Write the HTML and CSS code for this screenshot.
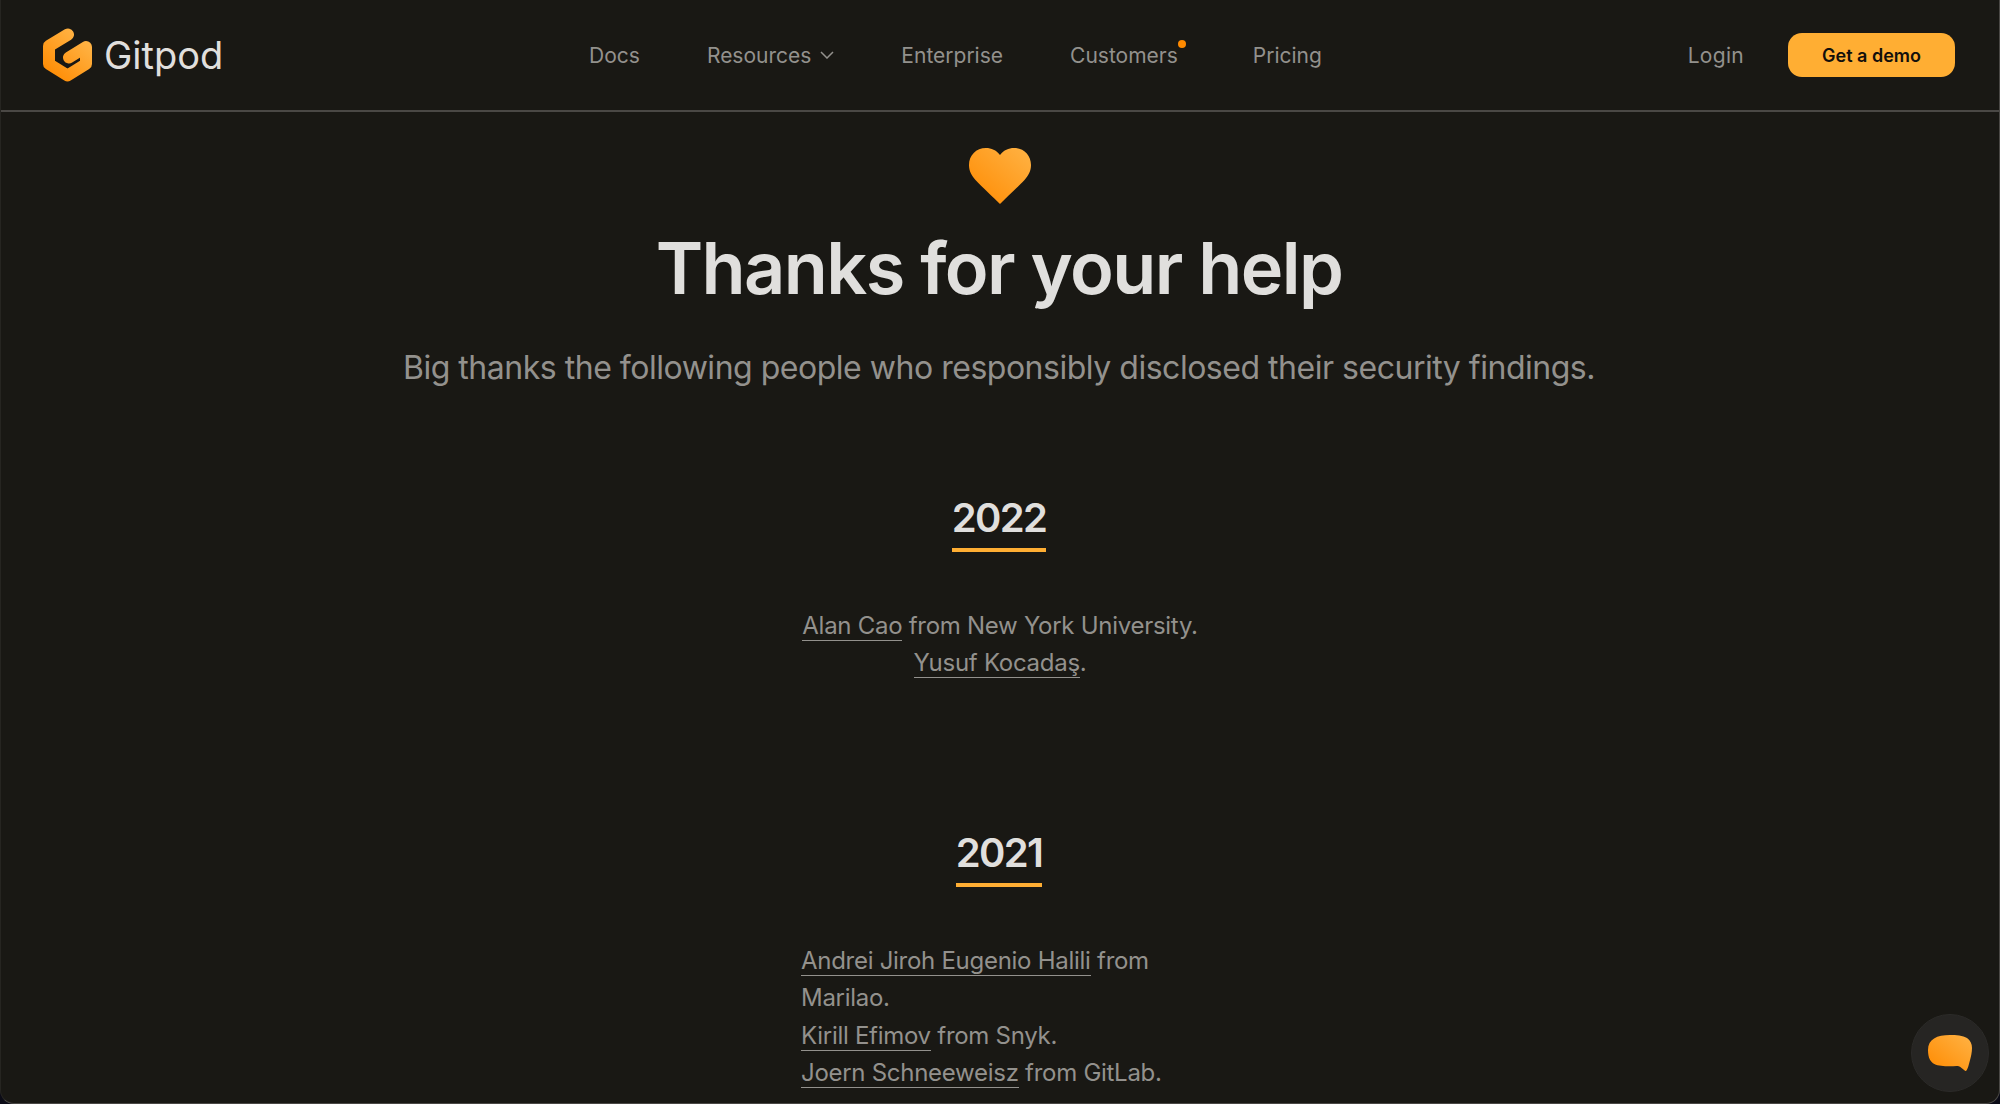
FILE: index.html
```html
<!DOCTYPE html>
<html lang="en">
<head>
    <meta charset="UTF-8">
    <meta name="viewport" content="width=device-width, initial-scale=1.0">
    <title>Thanks for your help</title>
    <link rel="stylesheet" href="styles.css">
</head>
<body>
    <div class="frame">
        <header class="site-header">
            <a class="logo" href="#">
                <svg class="logo-mark" viewBox="0 0 49 54" width="49" height="54">
                    <defs>
                        <linearGradient id="logoGrad" gradientUnits="userSpaceOnUse" x1="5" y1="50" x2="45" y2="5">
                            <stop offset="0" stop-color="#ff8a00"/>
                            <stop offset="1" stop-color="#ffb84d"/>
                        </linearGradient>
                    </defs>
                    <path d="M25 6.500L6 18V36L24.500 47.500L43 36V19L26 29.500" fill="none" stroke="url(#logoGrad)" stroke-width="12" stroke-linecap="round" stroke-linejoin="round"/>
                </svg>
                <span class="logo-text">Gitpod</span>
            </a>

            <nav class="main-nav">
                <a href="#">Docs</a>
                <a href="#" class="has-menu">Resources
                    <svg viewBox="0 0 14 8" width="14" height="8"><path d="M1 1l6 6 6-6" fill="none" stroke="currentColor" stroke-width="1.500"/></svg>
                </a>
                <a href="#">Enterprise</a>
                <a href="#" class="has-dot">Customers<span class="dot"></span></a>
                <a href="#">Pricing</a>
            </nav>

            <div class="header-actions">
                <a href="#" class="login">Login</a>
                <a href="#" class="demo-btn">Get a demo</a>
            </div>
        </header>

        <main class="content">
            <section class="intro">
                <svg class="heart" viewBox="0 0 62 56" width="62" height="56">
                    <defs>
                        <linearGradient id="heartGrad" x1="0" y1="1" x2="1" y2="0">
                            <stop offset="0" stop-color="#ff8a00"/>
                            <stop offset="1" stop-color="#ffb345"/>
                        </linearGradient>
                    </defs>
                    <path fill="url(#heartGrad)" d="M31 7C27 2 22.500 0 17 0 7 0 0 7.500 0 17c0 6 2.500 10.500 6.500 15C13 39 24 49 31 56c7-7 18-17 24.500-24C59.500 27.500 62 23 62 17 62 7.500 55 0 45 0 39.500 0 35 2 31 7z"/>
                </svg>
                <h1>Thanks for your help</h1>
                <p>Big thanks the following people who responsibly disclosed their security findings.</p>
            </section>

            <section class="year-block">
                <h2>2022</h2>
                <ul class="people centered">
                    <li><a href="#">Alan Cao</a> from New York University.</li>
                    <li><a href="#">Yusuf Kocadaş</a>.</li>
                </ul>
            </section>

            <section class="year-block">
                <h2>2021</h2>
                <ul class="people">
                    <li><a href="#">Andrei Jiroh Eugenio Halili</a> from Marilao.</li>
                    <li><a href="#">Kirill Efimov</a> from Snyk.</li>
                    <li><a href="#">Joern Schneeweisz</a> from GitLab.</li>
                </ul>
            </section>
        </main>

        <button class="chat-btn" aria-label="Chat">
            <svg viewBox="0 0 44 36" width="44" height="36">
                <defs>
                    <linearGradient id="chatGrad" x1="0" y1="1" x2="1" y2="0">
                        <stop offset="0" stop-color="#ff8a00"/>
                        <stop offset="1" stop-color="#ffb345"/>
                    </linearGradient>
                </defs>
                <path fill="url(#chatGrad)" d="M22 0c6 0 13 .5 17 3 3.500 2.500 5 6 5 10 0 4-1 9-2.500 14-.7 3-1.700 6.500-3 8.500-.5.600-1 .500-1.500.200l-5-4c-1-.7-2-.9-3.500-.7-2 .2-4.500.3-7 .3C10 31 0 31 0 15 0 4 9 0 22 0z"/>
            </svg>
        </button>
    </div>
</body>
</html>
```

FILE: styles.css
```css
* {
    box-sizing: border-box;
}
html, body {
    height: 100%;
}
body {
    margin: 0;
    background-color: #0b0b16;
    color: #e0dfdd;
    font-family: Inter, "Liberation Sans", sans-serif;
    overflow: hidden;
}
a {
    color: inherit;
    text-decoration: none;
}
.frame {
    position: relative;
    height: 1104px;
    overflow: hidden;
    background-color: #191814;
    border: 1px solid #4a4845;
    border-top: none;
    border-left-color: #262521;
    border-radius: 0 0 14px 14px;
}
.site-header {
    display: flex;
    align-items: center;
    justify-content: space-between;
    height: 112px;
    padding: 0 44px 0 42px;
    border-bottom: 2px solid #4a4845;
}
.logo {
    display: flex;
    align-items: center;
    gap: 12px;
}
.logo-text {
    font-size: 38px;
    letter-spacing: 0;
    color: #e0dfdd;
}
.main-nav {
    display: flex;
    align-items: center;
    gap: 67px;
    font-size: 21px;
    color: #93918d;
}
.has-menu {
    display: flex;
    align-items: center;
    gap: 9px;
}
.has-dot {
    position: relative;
    padding-right: 8px;
}
.dot {
    position: absolute;
    top: -3px;
    right: 0;
    width: 8px;
    height: 8px;
    border-radius: 50%;
    background-color: #ff8a00;
}
.header-actions {
    display: flex;
    align-items: center;
    gap: 44px;
}
.login {
    font-size: 21px;
    letter-spacing: 0.300px;
    color: #93918d;
}
.demo-btn {
    display: flex;
    align-items: center;
    justify-content: center;
    width: 167px;
    height: 44px;
    border-radius: 14px;
    background-color: #ffae33;
    color: #12100c;
    font-size: 18px;
    font-weight: 600;
}
.content {
    display: flex;
    flex-direction: column;
    align-items: center;
    padding-right: 2px;
}
.intro {
    display: flex;
    flex-direction: column;
    align-items: center;
    padding-top: 36px;
}
.heart {
    display: block;
    margin-left: 2px;
}
h1 {
    margin: 23px 0 0;
    font-size: 72px;
    font-weight: 600;
    letter-spacing: -1.600px;
    line-height: 82px;
    color: #e0dfdd;
}
.intro p {
    margin: 37px 0 0;
    font-size: 32px;
    letter-spacing: -0.480px;
    line-height: 44px;
    color: #93918d;
}
.year-block {
    display: flex;
    flex-direction: column;
    align-items: center;
    width: 400px;
    height: 335px;
}
.intro + .year-block {
    margin-top: 104px;
}
h2 {
    margin: 0;
    padding-bottom: 6px;
    border-bottom: 4px solid #ffae33;
    font-size: 40px;
    font-weight: 600;
    letter-spacing: -1.700px;
    line-height: 48px;
    color: #e0dfdd;
}
.people {
    width: 100%;
    margin: 54.500px 0 0;
    padding: 0 0 0 2px;
    list-style: none;
    font-size: 24px;
    letter-spacing: -0.280px;
    line-height: 37.500px;
    color: #93918d;
}
.people.centered {
    text-align: center;
}
.people a {
    border-bottom: 1px solid #93918d;
}
.chat-btn {
    position: absolute;
    right: 10px;
    bottom: 11px;
    display: flex;
    align-items: center;
    justify-content: center;
    width: 78px;
    height: 78px;
    padding: 0;
    border: 1px solid #2c2b29;
    border-radius: 50%;
    background-color: #262523;
    cursor: pointer;
}
```
